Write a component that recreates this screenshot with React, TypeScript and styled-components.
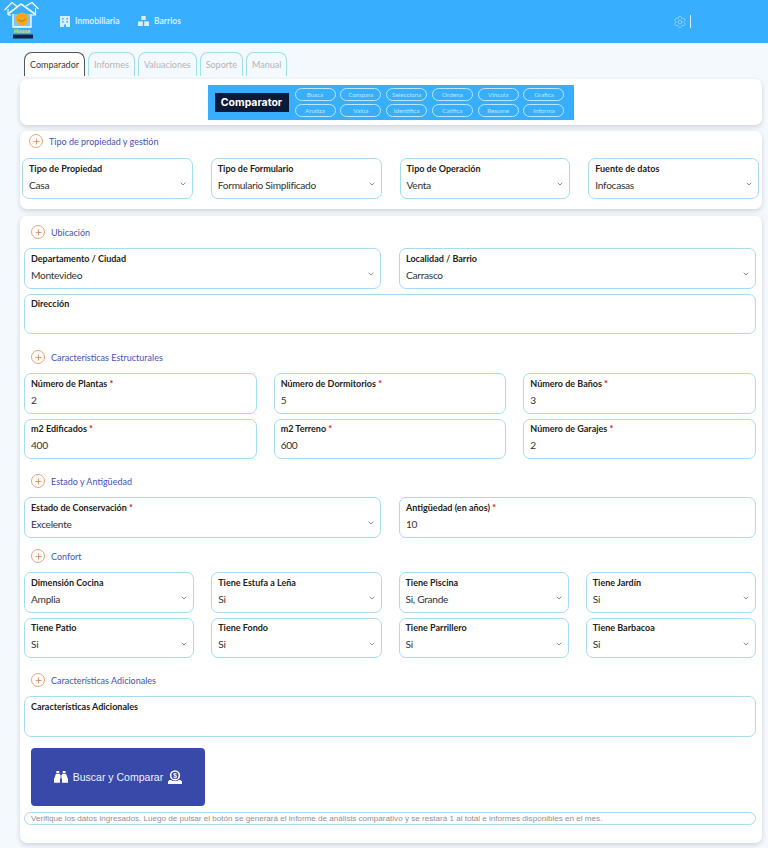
import React from 'react';
import styled, { createGlobalStyle } from 'styled-components';
import { ChevronDown, Plus, Settings } from 'lucide-react';

const GlobalStyle = createGlobalStyle`
  html, body {
    margin: 0;
    background: #f4f9fd;
    font-family: 'Lato', 'Liberation Sans', sans-serif;
  }
  * { box-sizing: border-box; }
`;

const tabs = ['Comparador', 'Informes', 'Valuaciones', 'Soporte', 'Manual'];
const pillsTop = ['Busca', 'Compara', 'Selecciona', 'Ordena', 'Vincula', 'Grafica'];
const pillsBottom = ['Analiza', 'Valúa', 'Identifica', 'Califica', 'Resume', 'Informa'];

const Logo = () => (
  <svg width="38" height="40" viewBox="0 0 38 40">
    <path d="M2.5 10 L10 2.5 L15 6.5 M6 9 V15 M9 15 H6" fill="none" stroke="#fff" strokeWidth="1.1" />
    <path d="M24 6 L30 2.5 L36.5 9 M33.5 8 V15 H30" fill="none" stroke="#fff" strokeWidth="1.1" />
    <path d="M6 14 L19 4 L33 14" fill="none" stroke="#eaf7ff" strokeWidth="1.6" />
    <path d="M11 14 V27 H29 V14" fill="#7cc8f8" stroke="#fff" strokeWidth="1.3" />
    <circle cx="20" cy="19" r="6.5" fill="#f2a71e" />
    <path d="M16 19.5 Q20 23.5 24 18.5" fill="none" stroke="#b9770f" strokeWidth="1" />
    <text x="20" y="33" fontSize="5.4" fontWeight="700" textAnchor="middle" fill="#e8e23a" fontFamily="Liberation Sans">
      House
    </text>
    <rect x="11" y="34.5" width="20" height="4" fill="#15233f" />
  </svg>
);

const BuildingIcon = () => (
  <svg width="10" height="11" viewBox="0 0 10 11" fill="#d6eeff">
    <path d="M0 0h10v11H6V8.5H4V11H0z" />
    <path d="M2 2h1.6v1.6H2z M6.4 2H8v1.6H6.4z M2 5h1.6v1.6H2z M6.4 5H8v1.6H6.4z" fill="#38aeff" />
  </svg>
);

const BlocksIcon = () => (
  <svg width="11" height="10" viewBox="0 0 11 10" fill="#d6eeff">
    <rect x="3.3" y="0" width="4.4" height="4" />
    <rect x="0" y="5.4" width="4.8" height="4.6" />
    <rect x="6.2" y="5.4" width="4.8" height="4.6" />
  </svg>
);

const Binoculars = () => (
  <svg width="14" height="12" viewBox="0 0 14 12" fill="#fff">
    <path d="M2.4 0h2.8v2H2.4z M8.8 0h2.8v2H8.8z" />
    <path d="M2 2.8h4v9H0V8z M8 2.8h4L14 8v3.8H8z M6.4 4h1.2v3.6H6.4z" />
  </svg>
);

const MoneyBag = () => (
  <svg width="14" height="14" viewBox="0 0 14 14">
    <circle cx="7" cy="5.4" r="4.4" fill="none" stroke="#fff" strokeWidth="1.6" />
    <text x="7" y="7.8" fontSize="6.5" fontWeight="700" textAnchor="middle" fill="#fff" fontFamily="Liberation Sans">
      $
    </text>
    <path d="M1.5 10h1.8l1 1h5.4l1-1h1.8L14 11.5V14H0v-2.5z" fill="#fff" />
  </svg>
);

const Field: React.FC<{ label: string; value?: string; required?: boolean; select?: boolean }> = ({
  label,
  value,
  required,
  select,
}) => (
  <FieldBox>
    <FieldLabel>
      {label}
      {required && <Required> *</Required>}
    </FieldLabel>
    <FieldValue>{value}</FieldValue>
    {select && (
      <Chevron>
        <ChevronDown size={8} strokeWidth={2} />
      </Chevron>
    )}
  </FieldBox>
);

const Section: React.FC<{ title: string; $gap?: number }> = ({ title, $gap }) => (
  <SectionTitle $gap={$gap}>
    <PlusCircle>
      <Plus size={9} strokeWidth={2} />
    </PlusCircle>
    {title}
  </SectionTitle>
);

const App: React.FC = () => (
  <>
    <GlobalStyle />
    <Header>
      <LogoSlot>
        <Logo />
      </LogoSlot>
      <NavLink $width={78}>
        <BuildingIcon />
        Inmobiliaria
      </NavLink>
      <NavLink>
        <BlocksIcon />
        Barrios
      </NavLink>
      <HeaderTools>
        <Settings size={14} strokeWidth={1.2} />
        <ToolDivider />
      </HeaderTools>
    </Header>

    <Page>
      <TabBar>
        {tabs.map((tab, i) => (
          <Tab key={tab} $active={i === 0}>
            {tab}
          </Tab>
        ))}
      </TabBar>

      <BannerCard>
        <Banner>
          <BannerTitle>Comparator</BannerTitle>
          <PillGrid>
            {[...pillsTop, ...pillsBottom].map((pill) => (
              <Pill key={pill}>{pill}</Pill>
            ))}
          </PillGrid>
        </Banner>
      </BannerCard>

      <TopCard>
        <TopTitle>
          <PlusCircle>
            <Plus size={9} strokeWidth={2} />
          </PlusCircle>
          Tipo de propiedad y gestión
        </TopTitle>
        <Grid $cols={4} $gap={18}>
          <Field label="Tipo de Propiedad" value="Casa" select />
          <Field label="Tipo de Formulario" value="Formulario Simplificado" select />
          <Field label="Tipo de Operación" value="Venta" select />
          <Field label="Fuente de datos" value="Infocasas" select />
        </Grid>
      </TopCard>

      <MainCard>
        <Section title="Ubicación" />
        <Grid $cols={2} $gap={18}>
          <Field label="Departamento / Ciudad" value="Montevideo" select />
          <Field label="Localidad / Barrio" value="Carrasco" select />
          <WideField>
            <Field label="Dirección" />
          </WideField>
        </Grid>

        <Section title="Características Estructurales" $gap={15} />
        <Grid $cols={3} $gap={17}>
          <Field label="Número de Plantas" value="2" required />
          <Field label="Número de Dormitorios" value="5" required />
          <Field label="Número de Baños" value="3" required />
          <Field label="m2 Edificados" value="400" required />
          <Field label="m2 Terreno" value="600" required />
          <Field label="Número de Garajes" value="2" required />
        </Grid>

        <Section title="Estado y Antigüedad" $gap={14} />
        <Grid $cols={2} $gap={18}>
          <Field label="Estado de Conservación" value="Excelente" required select />
          <Field label="Antigüedad (en años)" value="10" required />
        </Grid>

        <Section title="Confort" $gap={10.5} />
        <Grid $cols={4} $gap={17}>
          <Field label="Dimensión Cocina" value="Amplia" select />
          <Field label="Tiene Estufa a Leña" value="Si" select />
          <Field label="Tiene Piscina" value="Si, Grande" select />
          <Field label="Tiene Jardín" value="Si" select />
          <Field label="Tiene Patio" value="Si" select />
          <Field label="Tiene Fondo" value="Si" select />
          <Field label="Tiene Parrillero" value="Si" select />
          <Field label="Tiene Barbacoa" value="Si" select />
        </Grid>

        <Section title="Características Adicionales" $gap={14} />
        <Field label="Características Adicionales" />

        <SearchButton>
          <Binoculars />
          Buscar y Comparar
          <MoneyBag />
        </SearchButton>
        <Note>
          Verifique los datos ingresados. Luego de pulsar el botón se generará el informe de análisis comparativo y se
          restará 1 al total e informes disponibles en el mes.
        </Note>
      </MainCard>
    </Page>
  </>
);

const Header = styled.header`
  height: 43px;
  background: #38aeff;
  display: flex;
  align-items: center;
  padding-left: 2px;
`;

const LogoSlot = styled.div`
  width: 58px;
  height: 40px;
  align-self: flex-start;
`;

const NavLink = styled.div<{ $width?: number }>`
  display: flex;
  align-items: center;
  gap: 5px;
  width: ${({ $width }) => ($width ? `${$width}px` : 'auto')};
  padding-bottom: 1px;
  color: #d6eeff;
  font-size: 8.5px;
  font-weight: 700;
`;

const HeaderTools = styled.div`
  margin-left: auto;
  margin-right: 77px;
  display: flex;
  align-items: center;
  gap: 3px;
  color: #a6daff;
`;

const ToolDivider = styled.span`
  width: 1px;
  height: 13px;
  background: #d8f0ff;
`;

const Page = styled.main`
  padding: 9px 6px 5px 20px;
`;

const TabBar = styled.div`
  display: flex;
  gap: 3px;
  padding-left: 4px;
  height: 27px;
`;

const Tab = styled.div<{ $active: boolean }>`
  height: 24px;
  padding: 0 5px;
  display: flex;
  align-items: center;
  font-size: 9px;
  background: ${({ $active }) => ($active ? '#fff' : '#f4f9fd')};
  color: ${({ $active }) => ($active ? '#3a3a3a' : '#b4b4b8')};
  border: 1px solid ${({ $active }) => ($active ? '#555' : '#9fe0ee')};
  border-bottom: none;
  border-radius: 8px 8px 0 0;
`;

const Card = styled.section`
  background: #fff;
  border-radius: 7px;
  box-shadow: 0 2px 5px rgba(70, 80, 100, 0.22);
`;

const BannerCard = styled(Card)`
  height: 46px;
  display: flex;
  justify-content: center;
  align-items: center;
  padding-right: 1px;
`;

const Banner = styled.div`
  width: 366px;
  height: 35px;
  background: #38aeff;
  display: flex;
  align-items: center;
  padding-left: 7px;
  gap: 6px;
`;

const BannerTitle = styled.div`
  width: 74px;
  height: 19px;
  background: #0b1a38;
  color: #fff;
  font-family: 'Inter', 'Liberation Sans', sans-serif;
  font-size: 10.5px;
  font-weight: 700;
  display: flex;
  align-items: center;
  justify-content: center;
`;

const PillGrid = styled.div`
  display: grid;
  grid-template-columns: repeat(6, 41px);
  grid-auto-rows: 13px;
  column-gap: 4.8px;
  row-gap: 3px;
`;

const Pill = styled.div`
  border: 1px solid #bfe6ff;
  border-radius: 7px;
  color: #bfe6ff;
  font-size: 6.3px;
  display: flex;
  align-items: center;
  justify-content: center;
`;

const TopCard = styled(Card)`
  margin-top: 6px;
  height: 78px;
  padding: 2px 3px 0 2px;
`;

const TopTitle = styled.div`
  display: flex;
  align-items: center;
  gap: 6px;
  height: 16px;
  margin: 0 0 9px 7px;
  color: #4452b8;
  font-size: 9px;
`;

const MainCard = styled(Card)`
  margin-top: 7px;
  height: 627px;
  padding: 8px 6px 0 4px;
`;

const SectionTitle = styled.div<{ $gap?: number }>`
  display: flex;
  align-items: center;
  gap: 6px;
  height: 16px;
  margin: ${({ $gap }) => $gap ?? 0}px 0 8px 7px;
  color: #4452b8;
  font-size: 9px;
`;

const PlusCircle = styled.span`
  width: 14px;
  height: 14px;
  border-radius: 50%;
  border: 1px solid #e8a57e;
  color: #dc7d48;
  display: flex;
  align-items: center;
  justify-content: center;
`;

const Grid = styled.div<{ $cols: number; $gap: number }>`
  display: grid;
  grid-template-columns: repeat(${({ $cols }) => $cols}, minmax(0, 1fr));
  column-gap: ${({ $gap }) => $gap}px;
  row-gap: 5px;
`;

const WideField = styled.div`
  grid-column: 1 / -1;
`;

const FieldBox = styled.div`
  position: relative;
  height: 40.5px;
  padding: 3.5px 6px;
  background: #fff;
  border: 1px solid #a5dcf3;
  border-radius: 7px;
`;

const FieldLabel = styled.div`
  color: #222;
  font-size: 9px;
  font-weight: 700;
  line-height: 11px;
`;

const Required = styled.span`
  color: #d01020;
`;

const FieldValue = styled.div`
  margin-top: 5px;
  color: #333;
  font-size: 10.2px;
  letter-spacing: -0.3px;
  line-height: 13px;
  min-height: 13px;
`;

const Chevron = styled.span`
  position: absolute;
  right: 5px;
  top: 21px;
  color: #555;
  display: flex;
`;

const SearchButton = styled.button`
  margin: 11.5px 0 0 7px;
  width: 174px;
  height: 58px;
  border: none;
  border-radius: 4px;
  background: #3949a9;
  color: #f0f2ff;
  font-family: 'Liberation Sans', sans-serif;
  font-size: 10.5px;
  display: flex;
  align-items: center;
  justify-content: center;
  gap: 5px;
`;

const Note = styled.div`
  margin-top: 6px;
  height: 13px;
  padding-left: 6px;
  border: 1px solid #a5dcf3;
  border-radius: 7px;
  color: #909090;
  font-family: 'Liberation Sans', sans-serif;
  font-size: 8.11px;
  line-height: 11px;
  white-space: nowrap;
  overflow: hidden;
`;

export default App;
